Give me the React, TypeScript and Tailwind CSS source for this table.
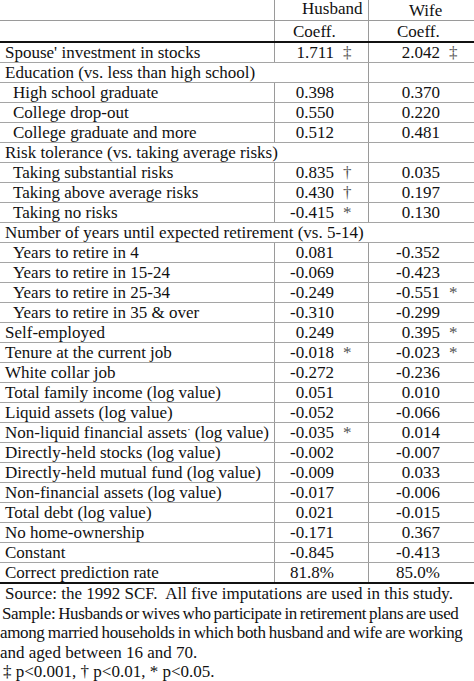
type Row = {
  label: string
  sup?: string
  indent?: boolean
  span?: 2 | 3
  h?: string
  hs?: string
  w?: string
  ws?: string
}

const rows: Row[] = [
  { label: "Spouse' investment in stocks", h: '1.711', hs: '‡', w: '2.042', ws: '‡' },
  { label: 'Education (vs. less than high school)', span: 2 },
  { label: 'High school graduate', indent: true, h: '0.398', w: '0.370' },
  { label: 'College drop-out', indent: true, h: '0.550', w: '0.220' },
  { label: 'College graduate and more', indent: true, h: '0.512', w: '0.481' },
  { label: 'Risk tolerance (vs. taking average risks)', span: 2 },
  { label: 'Taking substantial risks', indent: true, h: '0.835', hs: '†', w: '0.035' },
  { label: 'Taking above average risks', indent: true, h: '0.430', hs: '†', w: '0.197' },
  { label: 'Taking no risks', indent: true, h: '-0.415', hs: '*', w: '0.130' },
  { label: 'Number of years until expected retirement (vs. 5-14)', span: 3 },
  { label: 'Years to retire in 4', indent: true, h: '0.081', w: '-0.352' },
  { label: 'Years to retire in 15-24', indent: true, h: '-0.069', w: '-0.423' },
  { label: 'Years to retire in 25-34', indent: true, h: '-0.249', w: '-0.551', ws: '*' },
  { label: 'Years to retire in 35 & over', indent: true, h: '-0.310', w: '-0.299' },
  { label: 'Self-employed', h: '0.249', w: '0.395', ws: '*' },
  { label: 'Tenure at the current job', h: '-0.018', hs: '*', w: '-0.023', ws: '*' },
  { label: 'White collar job', h: '-0.272', w: '-0.236' },
  { label: 'Total family income (log value)', h: '0.051', w: '0.010' },
  { label: 'Liquid assets (log value)', h: '-0.052', w: '-0.066' },
  { label: 'Non-liquid financial assets', sup: '·', h: '-0.035', hs: '*', w: '0.014' },
  { label: 'Directly-held stocks (log value)', h: '-0.002', w: '-0.007' },
  { label: 'Directly-held mutual fund (log value)', h: '-0.009', w: '0.033' },
  { label: 'Non-financial assets (log value)', h: '-0.017', w: '-0.006' },
  { label: 'Total debt (log value)', h: '0.021', w: '-0.015' },
  { label: 'No home-ownership', h: '-0.171', w: '0.367' },
  { label: 'Constant', h: '-0.845', w: '-0.413' },
  { label: 'Correct prediction rate', h: '81.8%', w: '85.0%' },
]

function Value({ value, mark, wide }: { value?: string; mark?: string; wide?: boolean }) {
  return (
    <div className="flex h-full items-center">
      <span className={`${wide ? 'w-[71px]' : 'w-[59px]'} text-right`}>{value}</span>
      {mark && <span className="ml-[9px] text-[#555]">{mark}</span>}
    </div>
  )
}

function Label({ row }: { row: Row }) {
  return (
    <span className={`whitespace-nowrap ${row.indent ? 'pl-[13px]' : 'pl-[5px]'}`}>
      {row.label}
      {row.sup && (
        <>
          <sup className="text-[10px]">{row.sup}</sup> (log value)
        </>
      )}
    </span>
  )
}

export default function App() {
  return (
    <div className="h-[681px] w-[474px] overflow-hidden bg-white font-['Liberation_Serif',serif] text-[17px] leading-[19px] text-[#111]">
      {/* header */}
      <div className="flex h-[21px] border-b border-[#9a9a9a]">
        <div className="w-[275px] border-r border-[#9a9a9a]" />
        <div className="w-[94px] border-r border-[#9a9a9a] pl-[27px] leading-[17px]">Husband</div>
        <div className="flex w-[105px] items-end pl-[40px] leading-[19px]">Wife</div>
      </div>
      <div className="flex h-[22px] border-b-2 border-[#111]">
        <div className="w-[275px] border-r border-[#9a9a9a]" />
        <div className="flex w-[94px] items-center border-r border-[#9a9a9a] pl-[18px]">Coeff.</div>
        <div className="flex w-[105px] items-center pl-[28px]">Coeff.</div>
      </div>

      {/* body */}
      {rows.map((row, i) => {
        const last = i === rows.length - 1
        const border = last ? 'border-b-2 border-[#111]' : 'border-b border-[#a5a5a5]'
        if (row.span === 3) {
          return (
            <div key={i} className={`flex h-[20px] items-center ${border}`}>
              <Label row={row} />
            </div>
          )
        }
        if (row.span === 2) {
          return (
            <div key={i} className={`flex h-[20px] ${border}`}>
              <div className="flex w-[369px] items-center border-r border-[#9a9a9a]">
                <Label row={row} />
              </div>
              <div className="w-[105px]" />
            </div>
          )
        }
        return (
          <div key={i} className={`flex ${last ? 'h-[21px]' : 'h-[20px]'} ${border}`}>
            <div className="flex w-[275px] items-center border-r border-[#9a9a9a]">
              <Label row={row} />
            </div>
            <div className="w-[94px] border-r border-[#9a9a9a]">
              <Value value={row.h} mark={row.hs} />
            </div>
            <div className="w-[105px]">
              <Value value={row.w} mark={row.ws} wide />
            </div>
          </div>
        )
      })}

      {/* notes */}
      <div className="whitespace-nowrap leading-[19.5px]">
        <p className="pl-[5px]">Source: the 1992 SCF.&nbsp; All five imputations are used in this study.</p>
        <p className="pl-[2px] tracking-[-0.35px] [word-spacing:-1px]">Sample: Husbands or wives who participate in retirement plans are used</p>
        <p className="tracking-[-0.35px] [word-spacing:-0.6px]">among married households in which both husband and wife are working</p>
        <p>and aged between 16 and 70.</p>
        <p className="pl-[3px]">‡ p&lt;0.001, † p&lt;0.01, * p&lt;0.05.</p>
      </div>
    </div>
  )
}
